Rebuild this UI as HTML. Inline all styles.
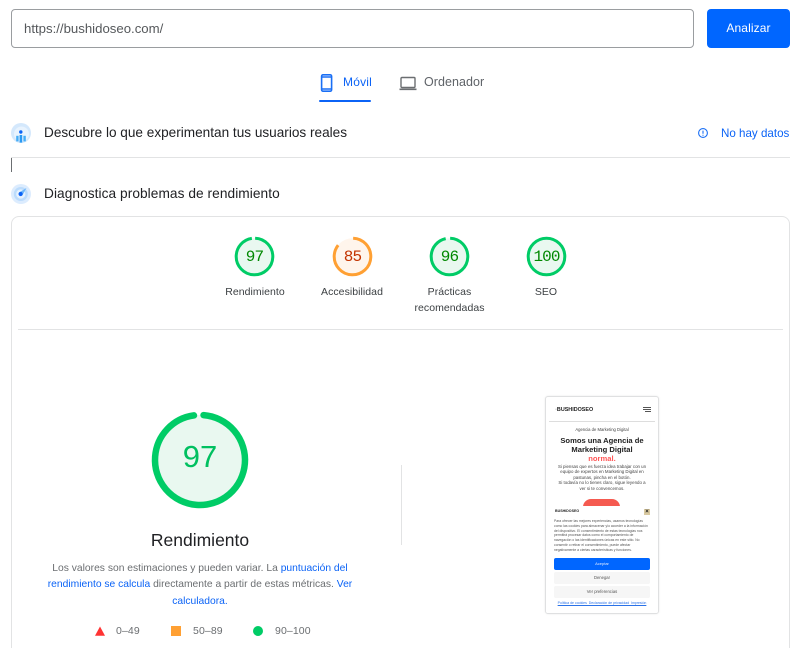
<!DOCTYPE html>
<html lang="es">
<head>
<meta charset="utf-8">
<title>PageSpeed Insights</title>
<style>
html,body{margin:0;padding:0;background:#fff;width:800px;height:648px;overflow:hidden}
#p{width:800px;height:648px;position:relative;overflow:hidden;font-family:"Liberation Sans",sans-serif;color:#202124}
.a{position:absolute;white-space:nowrap}
.c{text-align:center}
.m{font-family:"Liberation Mono",monospace;letter-spacing:-.9px}
svg{position:absolute;overflow:visible}
a{color:#0b63f6;text-decoration:none}
</style>
</head>
<body>
<div id="p">
<div class="a" style="left:11px;top:9px;width:681px;height:37px;border:1px solid #9a9da0;border-radius:4px"></div>
<div class="a" style="left:24px;top:20px;font-size:13.2px;line-height:17px;color:#55585b">https://bushidoseo.com/</div>
<div class="a c" style="left:707px;top:9px;width:83px;height:39px;line-height:39px;background:#0066ff;border-radius:4px;color:#fff;font-size:12px;letter-spacing:.1px">Analizar</div>

<svg style="left:320px;top:73px" width="14" height="20" viewBox="0 0 14 20" fill="none"><rect x="1.6" y="1.8" width="10" height="16.4" rx="1.4" stroke="#1a6ff5" stroke-width="1.6"/><path d="M1.5 4h10M1.5 16h10" stroke="#1a6ff5" stroke-width="1.4"/></svg>
<div class="a" style="left:343px;top:75px;font-size:12px;line-height:15px;color:#0b63f6;letter-spacing:.2px">Móvil</div>
<div class="a" style="left:319px;top:99.5px;width:52px;height:2.5px;background:#0b63f6;border-radius:2px"></div>
<svg style="left:399px;top:76px" width="19" height="15" viewBox="0 0 19 15" fill="none"><rect x="2" y="1.5" width="14" height="10" rx="1" stroke="#6b6e71" stroke-width="1.4"/><path d="M0.5 13.3h17" stroke="#6b6e71" stroke-width="1.6"/></svg>
<div class="a" style="left:424px;top:75px;font-size:12.5px;line-height:15px;color:#5f6368;letter-spacing:.05px">Ordenador</div>

<svg style="left:11px;top:123px" width="20" height="20" viewBox="0 0 20 20"><circle cx="10" cy="10" r="10" fill="#d4e8fc"/><circle cx="10.5" cy="11" r="7.5" fill="#e8f3fe"/><circle cx="9.8" cy="9" r="1.7" fill="#0b63f6"/><rect x="8.6" y="12" width="2.6" height="7.6" fill="#2b9af3"/><rect x="5.2" y="12.8" width="2.4" height="5.6" fill="#45adf6"/><rect x="12.4" y="12.8" width="2.4" height="5.6" fill="#45adf6"/></svg>
<div class="a" style="left:44px;top:124px;font-size:13.6px;line-height:17px;color:#202124">Descubre lo que experimentan tus usuarios reales</div>
<svg style="left:698px;top:128px" width="11" height="11" viewBox="0 0 11 11" fill="none"><circle cx="5" cy="5" r="4.4" stroke="#1a6ff5" stroke-width="1.1"/><path d="M5 2.6v3.2M5 6.7v1" stroke="#1a6ff5" stroke-width="1.1"/></svg>
<div class="a" style="left:721px;top:126px;font-size:11.6px;line-height:15px;color:#0b63f6">No hay datos</div>
<div class="a" style="left:11px;top:157px;width:779px;height:1px;background:#e2e3e4"></div>
<div class="a" style="left:11px;top:158px;width:1px;height:14px;background:#6b6e71"></div>

<svg style="left:11px;top:184px" width="20" height="20" viewBox="0 0 20 20"><circle cx="10" cy="10" r="10" fill="#dcecfe"/><circle cx="9.8" cy="10" r="7" fill="#bcdcfc"/><circle cx="9.8" cy="10" r="4.6" fill="#e6f2fe"/><path d="M8 8.5 15.5 4l-4.3 7.6z" fill="#6db7fb"/><circle cx="9.6" cy="10" r="2.1" fill="#0b63f6"/></svg>
<div class="a" style="left:44px;top:185px;font-size:13.7px;line-height:17px;color:#202124;letter-spacing:.06px">Diagnostica problemas de rendimiento</div>

<div class="a" style="left:11px;top:216px;width:777px;height:460px;border:1px solid #e2e3e4;border-radius:8px"></div>

<!-- small gauges -->
<svg style="left:234px;top:236px" width="41" height="41" viewBox="0 0 41 41"><circle cx="20.5" cy="20.5" r="18.3" fill="#e9f8f0"/><circle cx="20.5" cy="20.5" r="18.3" fill="none" stroke="#00cc66" stroke-width="3" stroke-dasharray="111.5 115" transform="rotate(-88 20.5 20.5)"/></svg>
<div class="a c m" style="left:234px;top:247px;width:41px;font-size:16px;line-height:20px;color:#008800">97</div>
<div class="a c" style="left:205px;top:284px;width:100px;font-size:10.5px;line-height:16px;color:#3c4043;letter-spacing:.05px">Rendimiento</div>

<svg style="left:332px;top:236px" width="41" height="41" viewBox="0 0 41 41"><circle cx="20.5" cy="20.5" r="18.3" fill="#fff5ec"/><circle cx="20.5" cy="20.5" r="18.3" fill="none" stroke="#ffa033" stroke-width="3" stroke-dasharray="97.7 115" transform="rotate(-88 20.5 20.5)"/></svg>
<div class="a c m" style="left:332px;top:247px;width:41px;font-size:16px;line-height:20px;color:#c33300">85</div>
<div class="a c" style="left:302px;top:284px;width:100px;font-size:10.5px;line-height:16px;color:#3c4043;letter-spacing:.05px">Accesibilidad</div>

<svg style="left:429px;top:236px" width="41" height="41" viewBox="0 0 41 41"><circle cx="20.5" cy="20.5" r="18.3" fill="#e9f8f0"/><circle cx="20.5" cy="20.5" r="18.3" fill="none" stroke="#00cc66" stroke-width="3" stroke-dasharray="110.3 115" transform="rotate(-88 20.5 20.5)"/></svg>
<div class="a c m" style="left:429px;top:247px;width:41px;font-size:16px;line-height:20px;color:#008800">96</div>
<div class="a c" style="left:399.5px;top:284px;width:100px;font-size:10.5px;line-height:16px;color:#3c4043;letter-spacing:.05px">Prácticas<br>recomendadas</div>

<svg style="left:526px;top:236px" width="41" height="41" viewBox="0 0 41 41"><circle cx="20.5" cy="20.5" r="18.3" fill="#e9f8f0"/><circle cx="20.5" cy="20.5" r="18.3" fill="none" stroke="#00cc66" stroke-width="3"/></svg>
<div class="a c m" style="left:526px;top:247px;width:41px;font-size:16px;line-height:20px;color:#008800">100</div>
<div class="a c" style="left:496px;top:284px;width:100px;font-size:10.5px;line-height:16px;color:#3c4043;letter-spacing:.05px">SEO</div>

<div class="a" style="left:18px;top:329px;width:765px;height:1px;background:#e2e3e4"></div>

<!-- main gauge -->
<svg style="left:150px;top:410px" width="100" height="100" viewBox="0 0 100 100"><circle cx="50" cy="50" r="45" fill="#e9f8f0"/><circle cx="50" cy="50" r="45" fill="none" stroke="#00cc66" stroke-width="6.5" stroke-linecap="round" stroke-dasharray="272.7 283" transform="rotate(-85.5 50 50)"/></svg>
<div class="a c" style="left:150px;top:439px;width:100px;font-size:31px;line-height:36px;color:#00c060">97</div>
<div class="a c" style="left:100px;top:530px;width:200px;font-size:17.5px;line-height:21px;color:#202124">Rendimiento</div>
<div class="a c" style="left:30px;top:561px;width:340px;font-size:10.3px;line-height:16.4px;color:#6b6e71">Los valores son estimaciones y pueden variar. La <a>puntuación del</a><br><a>rendimiento se calcula</a> directamente a partir de estas métricas. <a>Ver</a><br><a>calculadora.</a></div>

<svg style="left:95px;top:626px" width="10" height="10" viewBox="0 0 10 10"><path d="M5 0.5 10 9.7H0z" fill="#ff3333"/></svg>
<div class="a" style="left:116px;top:624px;font-size:10.5px;line-height:15px;color:#6b6e71;letter-spacing:.1px">0–49</div>
<div class="a" style="left:171px;top:626px;width:10px;height:10px;background:#ffa033"></div>
<div class="a" style="left:193px;top:624px;font-size:10.5px;line-height:15px;color:#6b6e71;letter-spacing:.1px">50–89</div>
<div class="a" style="left:253px;top:626px;width:10px;height:10px;border-radius:50%;background:#00cc66"></div>
<div class="a" style="left:275px;top:624px;font-size:10.5px;line-height:15px;color:#6b6e71;letter-spacing:.1px">90–100</div>

<div class="a" style="left:401px;top:465px;width:1px;height:80px;background:#e2e3e4"></div>

<!-- phone thumbnail -->
<div class="a" style="left:545px;top:396px;width:112px;height:216px;border:1px solid #dfe0e1;border-radius:3px;overflow:hidden;background:#fff;box-shadow:0 0 2px rgba(0,0,0,.08)">
 <div style="position:absolute;left:0;top:0;width:112px;height:216px;filter:blur(.35px)">
  <div class="a" style="left:9px;top:9px;font-size:5.4px;line-height:8px;font-weight:bold;color:#222"><span style="color:#999">◦</span>BUSHIDOSEO</div>
  <div class="a" style="left:97px;top:10px;width:8px;height:1px;background:#555"></div>
  <div class="a" style="left:97px;top:12px;width:8px;height:1px;background:#555"></div>
  <div class="a" style="left:99px;top:14px;width:6px;height:1px;background:#555"></div>
  <div class="a" style="left:3px;top:24px;width:106px;height:1px;background:#ddd"></div>
  <div class="a c" style="left:0;top:30px;width:112px;font-size:4.2px;line-height:6px;color:#444">Agencia de Marketing Digital</div>
  <div class="a c" style="left:0;top:38.5px;width:112px;font-size:7.6px;line-height:9px;font-weight:bold;color:#222">Somos una Agencia de<br>Marketing Digital<br><span style="color:#f55">normal.</span></div>
  <div class="a c" style="left:0;top:67px;width:112px;font-size:4.4px;line-height:5.4px;color:#444">Si piensas que es fuerza idea trabajar con un<br>equipo de expertos en Marketing Digital en<br>pastunas, pincha en el botón.<br>Si todavía no lo tienes claro, sigue leyendo a<br>ver si te convencemos.</div>
  <div class="a" style="left:37px;top:102px;width:37px;height:14px;background:#f55a50;border-radius:8px 8px 0 0"></div>
  <div class="a" style="left:0;top:109px;width:112px;height:107px;background:#fff"></div>
  <div class="a" style="left:9px;top:111px;font-size:3.6px;line-height:6px;font-weight:bold;color:#222">BUSHIDOSEO</div>
  <div class="a" style="left:98px;top:112px;width:6px;height:6px;background:#d9c9a0;color:#222;font-size:6px;line-height:6px;text-align:center;font-weight:bold">×</div>
  <div class="a" style="left:8px;top:122px;font-size:3.4px;line-height:4.75px;color:#555">Para ofrecer las mejores experiencias, usamos tecnologías<br>como las cookies para almacenar y/o acceder a la información<br>del dispositivo. El consentimiento de estas tecnologías nos<br>permitirá procesar datos como el comportamiento de<br>navegación o las identificaciones únicas en este sitio. No<br>consentir o retirar el consentimiento, puede afectar<br>negativamente a ciertas características y funciones.</div>
  <div class="a c" style="left:8px;top:161px;width:96px;height:12px;line-height:12px;background:#0066ff;border-radius:2px;color:#dfeaff;font-size:4px">Aceptar</div>
  <div class="a c" style="left:8px;top:175px;width:96px;height:12px;line-height:12px;background:#f6f6f6;border-radius:2px;color:#555;font-size:4.2px">Denegar</div>
  <div class="a c" style="left:8px;top:189px;width:96px;height:12px;line-height:12px;background:#f6f6f6;border-radius:2px;color:#555;font-size:4.2px">Ver preferencias</div>
  <div class="a c" style="left:0;top:203px;width:112px;font-size:3.5px;line-height:6px;color:#2a72e8;text-decoration:underline">Política de cookies &nbsp;Declaración de privacidad &nbsp;Impresión</div>
 </div>
</div>
</div>
</body>
</html>
